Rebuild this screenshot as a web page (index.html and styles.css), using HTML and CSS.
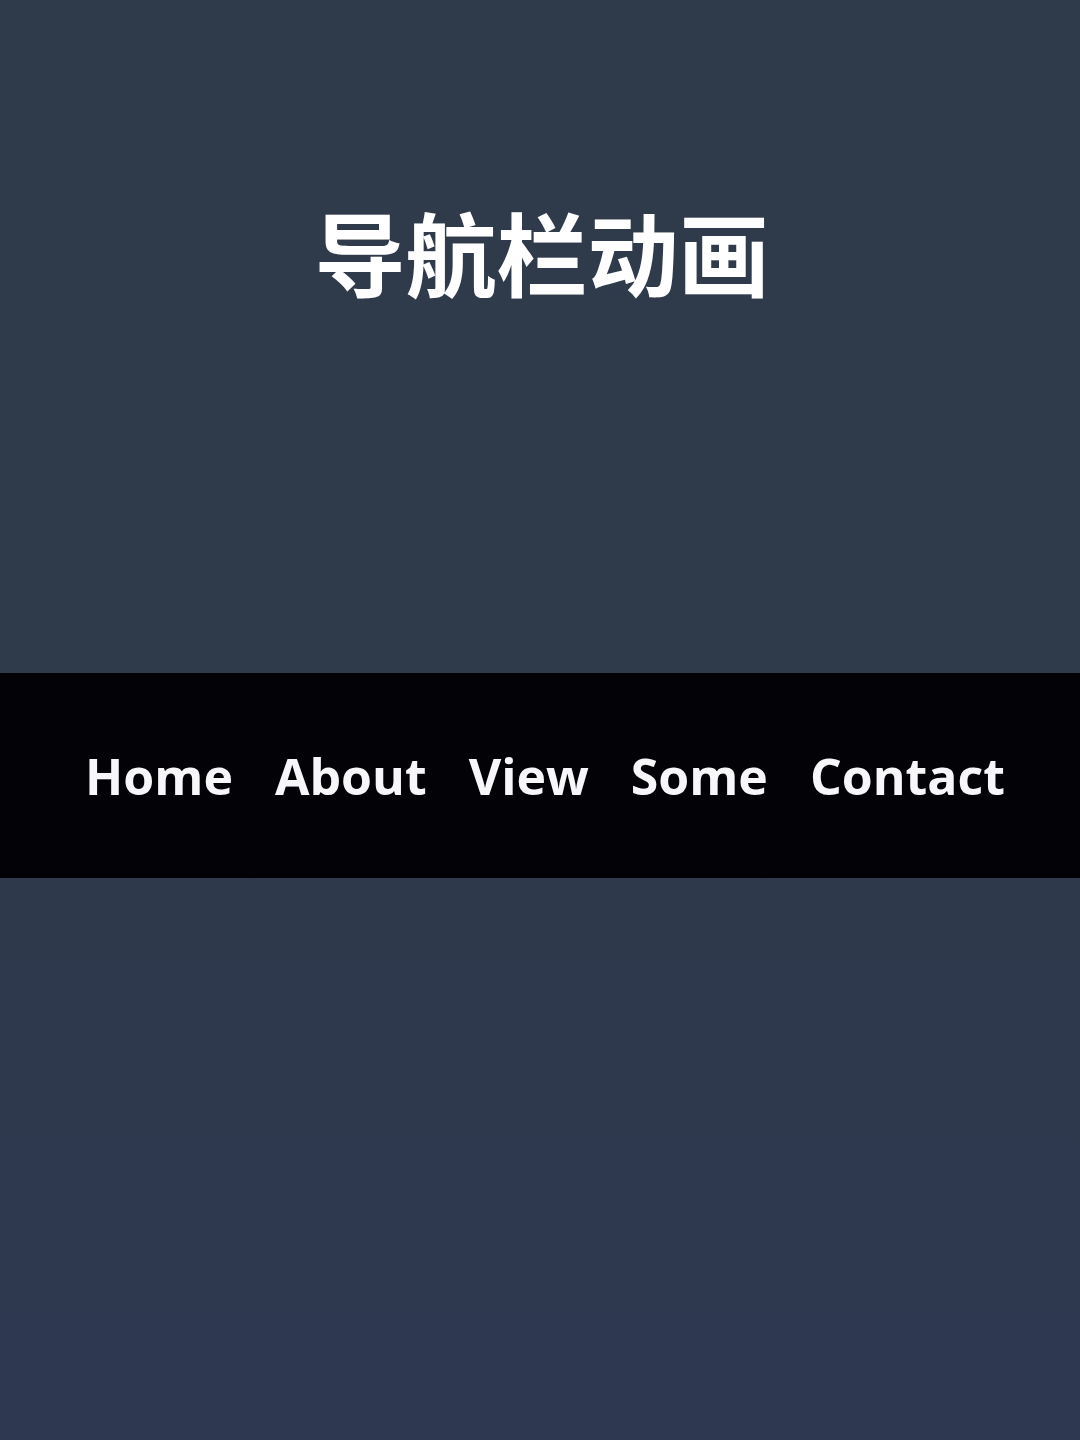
FILE: index.html
```html
<!DOCTYPE html>
<html lang="zh-CN">
<head>
<meta charset="utf-8">
<title>导航栏动画</title>
<link rel="stylesheet" href="styles.css">
</head>
<body>
<main class="page">
  <h1 class="title">导航栏动画</h1>
  <nav class="nav">
    <ul class="nav-list">
      <li class="nav-item">Home</li>
      <li class="nav-item">About</li>
      <li class="nav-item">View</li>
      <li class="nav-item">Some</li>
      <li class="nav-item">Contact</li>
    </ul>
  </nav>
</main>
</body>
</html>
```
FILE: styles.css
```css
html, body {
  margin: 0;
  padding: 0;
}
body {
  width: 1080px;
  height: 1440px;
  background: linear-gradient(180deg, #2f3a4a 0%, #2f3a4b 50%, #2e3851 100%);
  font-family: "Open Sans", "Noto Sans", "Noto Sans CJK SC", sans-serif;
  overflow: hidden;
}
.page {
  display: flex;
  flex-direction: column;
  align-items: stretch;
}
.title {
  margin: 196px 0 0 4px;
  height: 108px;
  line-height: 108px;
  font-family: "Noto Sans CJK SC", sans-serif;
  font-weight: 700;
  font-size: 91px;
  color: #ffffff;
  text-align: center;
  letter-spacing: 0;
}
.nav {
  margin-top: 369px;
  height: 205px;
  background: #030207;
  display: flex;
  align-items: center;
  justify-content: center;
}
.nav-list {
  list-style: none;
  margin: 0 0 0 10px;
  padding: 0;
  display: flex;
  gap: 42px;
}
.nav-item {
  color: #f7f7f9;
  font-family: "Open Sans", sans-serif;
  font-weight: 700;
  font-size: 50px;
  line-height: 1;
}
```
